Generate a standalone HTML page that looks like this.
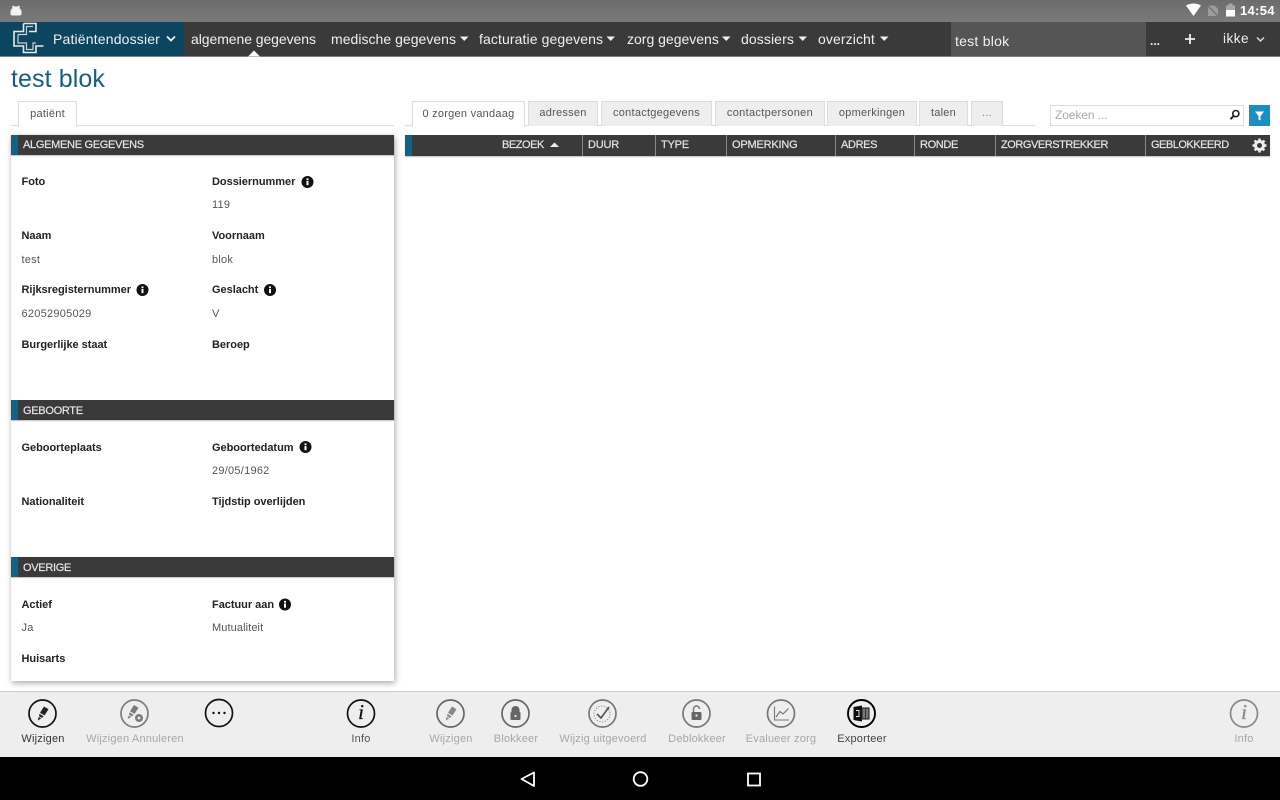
<!DOCTYPE html>
<html lang="nl"><head><meta charset="utf-8"><title>Patiëntendossier</title>
<style>
html,body{margin:0;padding:0;width:1280px;height:800px;overflow:hidden;background:#fff;font-family:"Liberation Sans",Arial,sans-serif}
.a{position:absolute}
.t{position:absolute;white-space:nowrap;line-height:16px;height:16px}
.n{color:#f0f0f0;font-size:14px;line-height:18px;height:18px}
.tab{position:absolute;top:101px;background:#eee;border:1px solid #ddd;border-bottom:none;box-sizing:border-box;height:25px;color:#555;font-size:11px;letter-spacing:.25px;text-align:center;line-height:22px;white-space:nowrap}
.h{position:absolute;background:#3a3a3a;height:20px;box-shadow:0 1px 1px rgba(0,0,0,.25)}
.b{position:absolute;left:0;top:0;bottom:0;width:7px;background:#0f6288}
.ht{position:absolute;color:#e6e6e6;font-size:11px;line-height:20px;top:0;white-space:nowrap;letter-spacing:-.3px;-webkit-text-stroke:.2px #e6e6e6}
.g{top:137px;height:16px;line-height:16px}
.l{font-size:11px;font-weight:bold;color:#222;letter-spacing:-.03px}
.v{font-size:11px;color:#555;letter-spacing:.25px}
.sep{position:absolute;top:135px;height:21px;width:1px;background:#8a8a8a}
.tb{font-size:11px;text-align:center;width:130px;letter-spacing:.2px}
.dk{color:#333}.lt{color:#a6a6a6}
svg{position:absolute;overflow:visible}
</style></head><body>

<!-- status bar -->
<div class="a" style="left:0;top:0;width:1280px;height:22px;background:linear-gradient(#6c6c6c,#7a7a7a)"></div>
<svg style="left:0;top:0" width="30" height="22"><path d="M12 6.5 L13.5 5.5 L14.5 6.6 Q16 6.2 17.5 6.6 L18.5 5.5 L20 6.5 L19.4 8 Q21.5 9.5 21.5 12 L21.5 13.5 Q21.5 15.5 19.5 15.5 L12.5 15.5 Q10.5 15.5 10.5 13.5 L10.5 12 Q10.5 9.5 12.6 8 Z" fill="#f2f2f2"/></svg>
<svg style="left:1180px;top:0" width="100" height="22">
<path d="M6 5 Q13.5 1 21 5 L13.5 15.5 Z" transform="translate(0 .5)" fill="#fff"/>
<path d="M28 5.5 H34.5 L38 9 V16 H28 Z" fill="#9c9c9c"/><path d="M27 5 L39 17" stroke="#6f6f6f" stroke-width="1.2"/>
<rect x="46" y="5.5" width="9" height="11" fill="#a8a8a8"/><rect x="48.5" y="3.5" width="4" height="2" fill="#a8a8a8"/><rect x="46" y="10" width="9" height="6.5" fill="#fff"/>
</svg>
<div class="t" style="left:1240px;top:3px;color:#fff;font-size:13px;font-weight:bold;letter-spacing:.3px">14:54</div>

<!-- nav -->
<div class="a" style="left:0;top:22px;width:1280px;background:#3a3a3a;border-bottom:1px solid #7d7d7d;box-sizing:border-box;height:35px"></div>
<div class="a" style="left:0;top:22px;width:184px;height:34px;background:#0b4560"></div>
<div class="a" style="left:951px;top:22px;width:195px;height:34px;background:#555"></div>
<svg style="left:0;top:22px" width="50" height="34" fill="none" stroke="#e8e8e8" stroke-width="1.6">
<path d="M23.5 1.5 H36 V9.5 H29 M36 9.5 V1.5 M23.5 1.5 V9.5 H14 V24 H23.5 V30.5 H36 V24 H43.5"/>
<path d="M18 12.5 H26.5 V4.5 H33 M18 12.5 V21 H26.5 V27.5 H33 V21 H36" stroke="#c4d2d9" stroke-width="1.2"/>
</svg>
<div class="t n" style="left:53px;top:30px;letter-spacing:.17px">Patiëntendossier</div>
<svg style="left:165px;top:35px" width="12" height="8" fill="none" stroke="#f0f0f0" stroke-width="1.8"><path d="M2 1.5 L6 5.5 L10 1.5"/></svg>
<div class="t n" style="left:191px;top:30px;letter-spacing:-.07px">algemene gegevens</div>
<div class="t n" style="left:331px;top:30px;letter-spacing:.03px">medische gegevens</div>
<div class="t n" style="left:479px;top:30px;letter-spacing:.1px">facturatie gegevens</div>
<div class="t n" style="left:627px;top:30px;letter-spacing:0">zorg gegevens</div>
<div class="t n" style="left:741px;top:30px;letter-spacing:.1px">dossiers</div>
<div class="t n" style="left:818px;top:30px;letter-spacing:.1px">overzicht</div>
<svg style="left:0;top:22px" width="1280" height="34" fill="#f0f0f0">
<path d="M460 14.5 h8.5 l-4.25 4.5z"/><path d="M606.5 14.5 h8.5 l-4.25 4.5z"/><path d="M722 14.5 h8.5 l-4.25 4.5z"/><path d="M798.5 14.5 h8.5 l-4.25 4.5z"/><path d="M880 14.5 h8.5 l-4.25 4.5z"/>
</svg>
<svg style="left:248px;top:50px" width="14" height="7"><path d="M0 6.5 L6 .5 L12 6.5Z" fill="#fff"/></svg>
<div class="t n" style="left:955px;top:32px;letter-spacing:.25px">test blok</div>
<div class="t n" style="left:1150px;top:32px;font-size:12px;font-weight:bold">...</div>
<svg style="left:1184px;top:33px" width="12" height="12"><path d="M1 6 H11 M6 1 V11" stroke="#f0f0f0" stroke-width="1.8"/></svg>
<div class="t n" style="left:1223px;top:30px;font-size:13.5px;letter-spacing:.5px">ikke</div>
<svg style="left:1255px;top:36px" width="12" height="8" fill="none" stroke="#ddd" stroke-width="1.5"><path d="M2 1.5 L5.5 5 L9 1.5"/></svg>

<!-- title -->
<div class="t" style="left:11px;top:65px;height:28px;line-height:28px;font-size:25px;color:#175e83;letter-spacing:.1px">test blok</div>

<!-- left tabs -->
<div class="a" style="left:11px;top:125px;width:383px;height:1px;background:#ddd"></div>
<div class="tab" style="left:18px;width:59px;background:#fff;border-color:#ddd;height:26px;z-index:1;line-height:25px">patiënt</div>

<!-- left panel -->
<div class="a" style="left:11px;top:135px;width:383px;height:546px;background:#fff;box-shadow:1px 2px 6px rgba(0,0,0,.35)"></div>

<div class="h" style="left:11px;top:135px;width:383px"><div class="b"></div><div class="ht" style="left:12px">ALGEMENE GEGEVENS</div></div>
<div class="t l" style="left:21.5px;top:174px">Foto</div>
<div class="t l" style="left:212px;top:174px">Dossiernummer</div>
<div class="t v" style="left:212px;top:197px">119</div>
<div class="t l" style="left:21.5px;top:228px">Naam</div>
<div class="t l" style="left:212px;top:228px">Voornaam</div>
<div class="t v" style="left:21.5px;top:252px">test</div>
<div class="t v" style="left:212px;top:252px">blok</div>
<div class="t l" style="left:21.5px;top:282px">Rijksregisternummer</div>
<div class="t l" style="left:212px;top:282px">Geslacht</div>
<div class="t v" style="left:21.5px;top:306px">62052905029</div>
<div class="t v" style="left:212px;top:306px">V</div>
<div class="t l" style="left:21.5px;top:337px">Burgerlijke staat</div>
<div class="t l" style="left:212px;top:337px">Beroep</div>

<div class="h" style="left:11px;top:400px;width:383px"><div class="b"></div><div class="ht" style="left:12px;top:1px">GEBOORTE</div></div>
<div class="t l" style="left:21.5px;top:440px">Geboorteplaats</div>
<div class="t l" style="left:212px;top:440px">Geboortedatum</div>
<div class="t v" style="left:212px;top:463px">29/05/1962</div>
<div class="t l" style="left:21.5px;top:494px">Nationaliteit</div>
<div class="t l" style="left:212px;top:494px">Tijdstip overlijden</div>

<div class="h" style="left:11px;top:557px;width:383px"><div class="b"></div><div class="ht" style="left:12px;top:1px">OVERIGE</div></div>
<div class="t l" style="left:21.5px;top:597px">Actief</div>
<div class="t l" style="left:212px;top:597px">Factuur aan</div>
<div class="t v" style="left:21.5px;top:620px">Ja</div>
<div class="t v" style="left:212px;top:620px;letter-spacing:.1px">Mutualiteit</div>
<div class="t l" style="left:21.5px;top:651px">Huisarts</div>

<svg style="left:0;top:0" width="400" height="700">
<defs><g id="i"><circle r="6" fill="#111"/><rect x="-1" y="-1" width="2" height="4.2" fill="#fff"/><rect x="-1" y="-3.6" width="2" height="1.8" fill="#fff"/></g></defs>
<use href="#i" x="307.5" y="182"/><use href="#i" x="142.5" y="290"/><use href="#i" x="270" y="290"/><use href="#i" x="305.5" y="447"/><use href="#i" x="285" y="604.5"/>
</svg>

<!-- right tabs -->
<div class="a" style="left:405px;top:125px;width:630px;height:1px;background:#ddd"></div>
<div class="tab" style="left:412px;width:113px;background:#fff;height:26px;top:101px;line-height:25px;z-index:1">0 zorgen vandaag</div>
<div class="tab" style="left:528px;width:70px">adressen</div>
<div class="tab" style="left:601px;width:111px">contactgegevens</div>
<div class="tab" style="left:715px;width:110px;letter-spacing:.32px">contactpersonen</div>
<div class="tab" style="left:827px;width:90px">opmerkingen</div>
<div class="tab" style="left:919px;width:49px">talen</div>
<div class="tab" style="left:971px;width:32px;color:#888">...</div>

<!-- search -->
<div class="a" style="left:1050px;top:105px;width:194px;height:21px;background:#fff;border:1px solid #ddd;box-sizing:border-box"></div>
<div class="t" style="left:1055px;top:107px;color:#aaa;font-size:12px;letter-spacing:-.1px">Zoeken ...</div>
<svg style="left:1228px;top:108px" width="14" height="14" fill="none" stroke="#222" stroke-width="1.6"><circle cx="7.8" cy="5.6" r="3.1"/><path d="M5.5 8 L2.5 11.2" stroke-width="2"/></svg>
<div class="a" style="left:1249px;top:105px;width:21px;height:21px;background:#1a8fc2"></div>
<svg style="left:1249px;top:105px" width="21" height="21"><path d="M6 6.5 H15 L11.5 11 V15.5 L9.5 14.5 V11Z" fill="#fff"/></svg>

<!-- grid header -->
<div class="h" style="left:405px;top:135px;width:865px;height:21px"><div class="b"></div></div>
<div class="ht t g" style="left:502px;letter-spacing:-.45px">BEZOEK</div>
<svg style="left:549px;top:141px" width="11" height="7"><path d="M1 6 H10 L5.5 1.5Z" fill="#eee"/></svg>
<div class="sep" style="left:582px"></div><div class="ht t g" style="left:588px;letter-spacing:-.2px">DUUR</div>
<div class="sep" style="left:655px"></div><div class="ht t g" style="left:661px;letter-spacing:-.2px">TYPE</div>
<div class="sep" style="left:726px"></div><div class="ht t g" style="left:732px;letter-spacing:-.2px">OPMERKING</div>
<div class="sep" style="left:835px"></div><div class="ht t g" style="left:841px;letter-spacing:-.35px">ADRES</div>
<div class="sep" style="left:914px"></div><div class="ht t g" style="left:920px;letter-spacing:-.35px">RONDE</div>
<div class="sep" style="left:995px"></div><div class="ht t g" style="left:1001px;letter-spacing:-.45px">ZORGVERSTREKKER</div>
<div class="sep" style="left:1145px"></div><div class="ht t g" style="left:1151px;letter-spacing:-.5px">GEBLOKKEERD</div>
<svg style="left:1252px;top:138px" width="15" height="15"><circle cx="7.5" cy="7.5" r="4" fill="none" stroke="#eee" stroke-width="3"/><path d="M7.5 .5 V14.5 M.5 7.5 H14.5 M2.5 2.5 L12.5 12.5 M12.5 2.5 L2.5 12.5" stroke="#eee" stroke-width="2.4" stroke-dasharray="2.6 8.8 2.6"/></svg>

<!-- toolbar -->
<div class="a" style="left:0;top:691px;width:1280px;height:66px;background:#eee;border-top:1px solid #ccc;box-sizing:border-box"></div>
<div class="a" style="left:0;top:757px;width:1280px;height:43px;background:#000"></div>

<svg style="left:0;top:690px" width="1280" height="50" fill="none">
<defs>
<g id="pen"><path d="M1.5 -7 L6 -4.2 L2 2 L-2.5 -.8 Z"/><path d="M-3 .3 L1 2.9 L-.5 4.5 L-3.5 2.6 Z"/><path d="M-3.8 3.4 L-1.3 5 L-4.8 7 Z"/></g>
<g id="lock"><path d="M-3.2 -1.5 V-3.5 A3.2 3.2 0 0 1 3.2 -3.5 V-1.5" stroke-width="1.7"/><rect x="-5" y="-1.5" width="10" height="8" rx="1" stroke="none"/></g>
</defs>
<circle cx="42.5" cy="23.5" r="13.5" stroke="#111" stroke-width="1.7"/><use href="#pen" x="42.5" y="23.5" fill="#222"/>
<circle cx="134.5" cy="23.5" r="13.5" stroke="#7c7c7c" stroke-width="1.7"/><use href="#pen" x="132.5" y="22" fill="#7c7c7c"/><circle cx="139" cy="28" r="4" fill="#7c7c7c"/><circle cx="139" cy="28" r="1.4" fill="#eee"/>
<circle cx="219" cy="23" r="13.5" stroke="#111" stroke-width="1.7"/><circle cx="213.5" cy="23" r="1.2" fill="#111"/><circle cx="219" cy="23" r="1.2" fill="#111"/><circle cx="224.5" cy="23" r="1.2" fill="#111"/>
<circle cx="361" cy="23.5" r="13.5" stroke="#111" stroke-width="1.7"/>
<circle cx="450.5" cy="23.5" r="13.5" stroke="#666" stroke-width="1.7"/><use href="#pen" x="450.5" y="23.5" fill="#888"/>
<circle cx="515.5" cy="23.5" r="13.5" stroke="#666" stroke-width="1.7"/><use href="#lock" x="515.5" y="23.5" fill="#666" stroke="#666"/><circle cx="515.5" cy="26" r="1.1" fill="#eee"/>
<circle cx="602.5" cy="23.5" r="13.5" stroke="#777" stroke-width="1.7"/><circle cx="602" cy="24" r="8" stroke="#888" stroke-dasharray="1.2 1.6"/><path d="M597 24 L601 28 L609 17" stroke="#555" stroke-width="1.7"/>
<circle cx="696.5" cy="23.5" r="13.5" stroke="#777" stroke-width="1.7"/><path d="M693.5 22 V19 A3 3 0 0 1 699.5 19" stroke="#777" stroke-width="1.5"/><rect x="691.5" y="22" width="10" height="8" rx="1" fill="#666"/><circle cx="696.5" cy="25.5" r="1.1" fill="#eee"/>
<circle cx="781" cy="23.5" r="13.5" stroke="#777" stroke-width="1.7"/><path d="M774.5 16.5 V30 H789" stroke="#777" stroke-width="1.1"/><path d="M776 27 L780 21.5 L783 24 L788.5 18.5" stroke="#777" stroke-width="1.2"/>
<circle cx="861.5" cy="23.5" r="13.5" stroke="#000" stroke-width="1.9"/><path d="M853.5 17 L862 15.5 V31.5 L853.5 30 Z" fill="#111"/><rect x="862" y="18" width="7" height="11" fill="#777" stroke="#222" stroke-width="1.1"/><path d="M865.5 18 V29" stroke="#222" stroke-width=".8"/><path d="M856 20.5 H859 V26.5 H856" stroke="#eee" stroke-width=".9"/>
<circle cx="1244" cy="23.5" r="13.5" stroke="#888" stroke-width="1.7"/>
</svg>
<div class="t" style="left:351px;top:700px;height:28px;line-height:28px;width:20px;text-align:center;font:italic 21px 'Liberation Serif',serif;color:#111;-webkit-text-stroke:.3px #111">i</div>
<div class="t" style="left:1234px;top:700px;height:28px;line-height:28px;width:20px;text-align:center;font:italic 21px 'Liberation Serif',serif;color:#888;-webkit-text-stroke:.3px #888">i</div>

<div class="t tb dk" style="left:-22px;top:731px">Wijzigen</div>
<div class="t tb lt" style="left:70px;top:731px">Wijzigen Annuleren</div>
<div class="t tb dk" style="left:296px;top:731px;color:#555">Info</div>
<div class="t tb lt" style="left:386px;top:731px">Wijzigen</div>
<div class="t tb lt" style="left:451px;top:731px">Blokkeer</div>
<div class="t tb lt" style="left:538px;top:731px">Wijzig uitgevoerd</div>
<div class="t tb lt" style="left:632px;top:731px">Deblokkeer</div>
<div class="t tb lt" style="left:716px;top:731px">Evalueer zorg</div>
<div class="t tb dk" style="left:797px;top:731px;color:#444">Exporteer</div>
<div class="t tb lt" style="left:1179px;top:731px">Info</div>

<!-- android nav -->
<svg style="left:0;top:757px" width="1280" height="43" fill="none" stroke="#fff" stroke-width="1.8">
<path d="M534 15.5 V29 L521.5 22 Z" stroke-linejoin="round"/>
<circle cx="640.5" cy="22" r="6.8"/>
<rect x="748" y="16.5" width="12" height="12"/>
</svg>
</body></html>
